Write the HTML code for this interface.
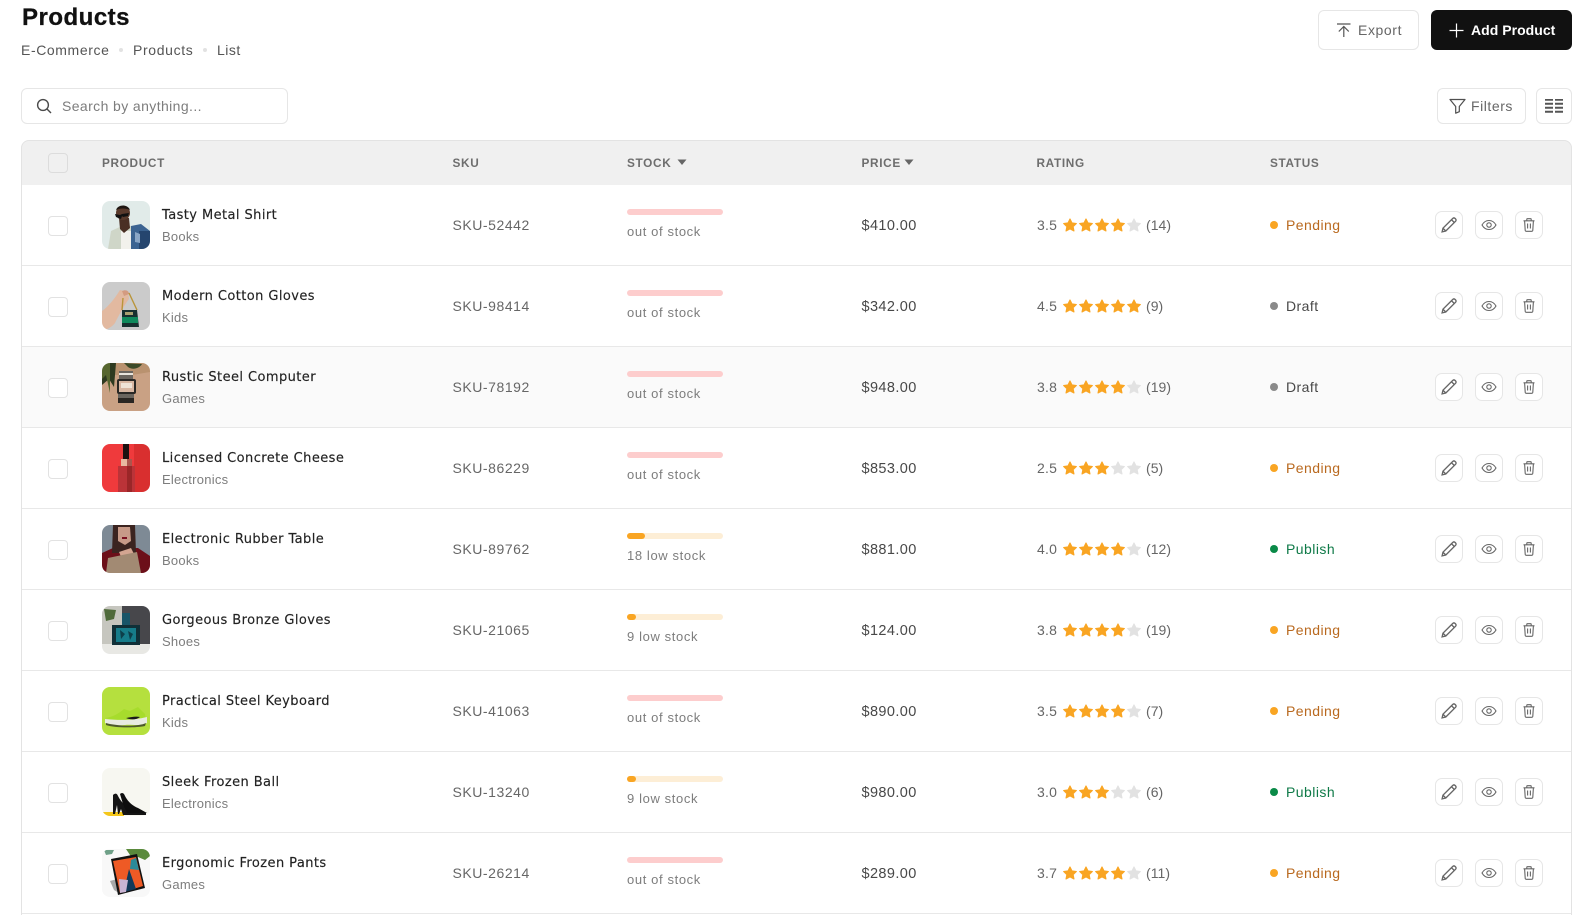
<!DOCTYPE html>
<html><head><meta charset="utf-8"><title>Products</title>
<style>
*{box-sizing:border-box}
html,body{margin:0;padding:0;width:1591px;height:915px;overflow:hidden;background:#fff;font-family:"Liberation Sans",sans-serif;color:#484848}
.a{position:absolute;white-space:nowrap}
.btn{position:absolute;border:1px solid #e6e6e6;border-radius:6px;background:#fff}
.frame{position:absolute;left:21px;top:140px;width:1551px;height:775px;border:1px solid #e3e3e3;border-bottom:0;border-radius:8px 8px 0 0;z-index:5;pointer-events:none}
.head{position:absolute;left:21px;top:140px;width:1551px;height:45px;background:#f0f0f0;border-radius:8px 8px 0 0}
.th{position:absolute;top:14px;line-height:18px;font-size:11.8px;font-weight:bold;color:#6e6e6e;letter-spacing:.66px}
.cb{position:absolute;left:27px;width:20px;height:20px;border:1px solid #e2e2e2;border-radius:4px;background:#fff}
.r{position:absolute;left:21px;width:1551px;height:81px;border-bottom:1px solid #e8e8e8;background:#fff}
.r.g{background:#fafafa}
.r .cb{top:31px}
.im{position:absolute;left:81px;top:16px;width:48px;height:48px;border-radius:8px;overflow:hidden}
.im svg{display:block;width:48px;height:48px;filter:blur(.35px)}
.n{position:absolute;left:141px;top:21px;line-height:20px;font-family:"DejaVu Sans",sans-serif;font-size:13px;color:#222;white-space:nowrap;letter-spacing:.42px;-webkit-text-stroke:.15px #222}
.c{position:absolute;left:141px;top:42px;line-height:20px;font-size:13px;color:#7d7d7d;letter-spacing:.25px;white-space:nowrap}
.s{position:absolute;left:431.5px;top:30px;line-height:20px;font-size:14px;color:#666;letter-spacing:.55px}
.bar{position:absolute;left:606px;top:24px;width:96px;height:6px;border-radius:3px;background:#fdcdcd}
.bar.l{background:#fdeed6}
.bar i{position:absolute;left:0;top:0;height:6px;border-radius:3px;background:#f9a523}
.st{position:absolute;left:606px;top:37px;line-height:20px;font-size:13px;color:#7d7d7d;letter-spacing:.62px;white-space:nowrap}
.p{position:absolute;left:840.5px;top:31px;line-height:20px;font-size:14.5px;color:#484848;letter-spacing:.4px}
.rt{position:absolute;left:1016px;top:30px;line-height:20px;font-size:14px;color:#666;letter-spacing:.2px}
.stars{position:absolute;left:1040px;top:33px;width:82px;height:14px}
.cnt{position:absolute;left:1125px;top:30px;line-height:20px;font-size:14px;color:#666;letter-spacing:.05px}
.dot{position:absolute;left:1249px;top:36px;width:8px;height:8px;border-radius:50%}
.stt{position:absolute;left:1265px;top:30px;line-height:20px;font-size:14px;letter-spacing:.45px}
.pe{color:#b9691f}.dp{background:#f9a523}
.dr{color:#484848}.dd{background:#8a8a8a}
.pu{color:#0f7a48}.du{background:#0a8a48}
.ac{position:absolute;top:26px;width:28px;height:28px;border:1px solid #e6e6e6;border-radius:7px;background:#fff}
.ac svg{position:absolute;left:5px;top:5px;width:16px;height:16px;fill:none;stroke:#666;stroke-width:1.1}
</style></head><body>
<svg width="0" height="0" style="position:absolute">
<defs>
<polygon id="st" points="7,.9 9,4.9 13.4,5.5 10.2,8.6 11,13 7,10.9 3,13 3.8,8.6 .6,5.5 5,4.9" stroke-width="1" stroke-linejoin="round"/>
<symbol id="s3" viewBox="0 0 78 14"><g fill="#f9a523" stroke="#f9a523"><use href="#st"/><use href="#st" x="16"/><use href="#st" x="32"/></g><g fill="#e2e2e2" stroke="#e2e2e2"><use href="#st" x="48"/><use href="#st" x="64"/></g></symbol>
<symbol id="s4" viewBox="0 0 78 14"><g fill="#f9a523" stroke="#f9a523"><use href="#st"/><use href="#st" x="16"/><use href="#st" x="32"/><use href="#st" x="48"/></g><g fill="#e2e2e2" stroke="#e2e2e2"><use href="#st" x="64"/></g></symbol>
<symbol id="s5" viewBox="0 0 78 14"><g fill="#f9a523" stroke="#f9a523"><use href="#st"/><use href="#st" x="16"/><use href="#st" x="32"/><use href="#st" x="48"/><use href="#st" x="64"/></g></symbol>
<symbol id="pen" viewBox="1.500 1.500 13 13"><path d="M2.400 13.600l.7-3L11 2.700c.6-.6 1.400-.6 2 0l.3.3c.6.6.6 1.400 0 2l-7.900 7.900zM3.100 10.600l2.300 2.300M10 3.700l2.300 2.300"/></symbol>
<symbol id="eye" viewBox="0 0 16 16"><path d="M1 8c1.700-3 4-4.500 7-4.500S13.300 5 15 8c-1.700 3-4 4.500-7 4.500S2.700 11 1 8z"/><circle cx="8" cy="8" r="2.200"/></symbol>
<symbol id="tr" viewBox="0 0 16 16"><path d="M2.500 3.800h11M5.800 3.600V2.200c0-.3.200-.5.500-.5h3.400c.3 0 .5.200.5.500v1.400M3.600 3.800l.6 9.400c.1.700.5 1.100 1.100 1.100h5.400c.6 0 1-.4 1.100-1.100l.6-9.400M6.600 6.500v5M9.400 6.500v5"/></symbol>
</defs></svg>

<div class="a" style="left:22px;top:3px;line-height:30px;font-size:24px;font-weight:bold;color:#111;letter-spacing:.5px;-webkit-text-stroke:.3px #111">Products</div>
<div class="a" style="left:21px;top:40px;line-height:20px;font-size:14px;color:#555;letter-spacing:.6px">E-Commerce</div>
<div class="a" style="left:119px;top:48px;width:4px;height:4px;border-radius:50%;background:#e2e2e2"></div>
<div class="a" style="left:133px;top:40px;line-height:20px;font-size:14px;color:#555;letter-spacing:.65px">Products</div>
<div class="a" style="left:203px;top:48px;width:4px;height:4px;border-radius:50%;background:#e2e2e2"></div>
<div class="a" style="left:217px;top:40px;line-height:20px;font-size:14px;color:#555;letter-spacing:.5px">List</div>

<div class="btn" style="left:1318px;top:10px;width:101px;height:40px"></div>
<svg class="a" style="left:1336px;top:22px" width="16" height="16" viewBox="0 0 16 16" fill="none" stroke="#555" stroke-width="1.200"><path d="M1 2h13.500M7.800 15V4.800M2.800 9.500l5-5 5 5"/></svg>
<div class="a" style="left:1358px;top:20px;line-height:20px;font-size:14px;color:#666;letter-spacing:.6px">Export</div>
<div class="a" style="left:1431px;top:10px;width:141px;height:40px;border-radius:6px;background:#111"></div>
<svg class="a" style="left:1449px;top:23px" width="15" height="15" viewBox="0 0 15 15" fill="none" stroke="#fff" stroke-width="1.200"><path d="M7.500 .5v14M.5 7.500h14"/></svg>
<div class="a" style="left:1471px;top:20px;line-height:20px;font-size:14px;font-weight:bold;color:#fff;letter-spacing:.03px">Add Product</div>

<div class="btn" style="left:21px;top:88px;width:267px;height:36px"></div>
<svg class="a" style="left:36px;top:98px" width="16" height="16" viewBox="0 0 16 16" fill="none" stroke="#4a4a4a" stroke-width="1.400"><circle cx="7" cy="7" r="5.400"/><path d="M11 11l4 4"/></svg>
<div class="a" style="left:62px;top:96px;line-height:20px;font-size:14px;color:#7d7d7d;letter-spacing:.4px">Search by anything...</div>

<div class="btn" style="left:1437px;top:88px;width:89px;height:36px"></div>
<svg class="a" style="left:1449px;top:98px" width="17" height="16" viewBox="0 0 17 16" fill="none" stroke="#4f4f4f" stroke-width="1.200" stroke-linejoin="round"><path d="M1 1.500h15l-5.700 7v5.200l-3.600 1.500V8.500z"/></svg>
<div class="a" style="left:1471px;top:96px;line-height:20px;font-size:14px;color:#666;letter-spacing:.55px">Filters</div>
<div class="btn" style="left:1536px;top:88px;width:36px;height:36px"></div>
<svg class="a" style="left:1545px;top:99px" width="18" height="14" viewBox="0 0 18 14" fill="#555"><path d="M0 0h8v2H0zM10 0h8v2h-8zM0 4h8v2H0zM10 4h8v2h-8zM0 8h8v2H0zM10 8h8v2h-8zM0 12h8v2H0zM10 12h8v2h-8z" transform="translate(0 -.3)"/></svg>

<div class="head">
<div class="cb" style="top:13px;background:#f0f0f0;border-color:#dcdcdc"></div>
<div class="th" style="left:81px">PRODUCT</div>
<div class="th" style="left:431.5px">SKU</div>
<div class="th" style="left:606px">STOCK</div>
<svg class="a" style="left:656px;top:19px" width="10" height="7" viewBox="0 0 10 7" fill="#666"><path d="M.5.500h9L5 6z"/></svg>
<div class="th" style="left:840.5px">PRICE</div>
<svg class="a" style="left:883px;top:19px" width="10" height="7" viewBox="0 0 10 7" fill="#666"><path d="M.5.500h9L5 6z"/></svg>
<div class="th" style="left:1015.500px">RATING</div>
<div class="th" style="left:1249px">STATUS</div>
</div>

<div class="r" style="top:185px"><div class="cb"></div>
<div class="im"><svg viewBox="0 0 48 48"><rect width="48" height="48" fill="#e1ebe9"/><path d="M6 48L9 30l11-5h10l18 5v18z" fill="#cfd6c8"/><path d="M19 30h11v18H19z" fill="#f2f1ec"/><path d="M29 25l10-2 9 7v18H29z" fill="#3b6391"/><path d="M37 30h11v18H37z" fill="#25456e"/><path d="M33 31l5 2v9l-5-1z" fill="#8aa6c6"/><path d="M17 17l10 0 1 10-6 5-4-4z" fill="#4a2f24"/><circle cx="21" cy="12" r="7" fill="#5a3a2c"/><path d="M14 9c2-6 12-6 14 0-4-2-10-2-14 0z" fill="#1f1712"/><path d="M13 13l5 1 2-1 7-1-1 3-5 1-1-1-1 3-5-2z" fill="#111"/></svg></div>
<div class="n">Tasty Metal Shirt</div><div class="c">Books</div><div class="s">SKU-52442</div>
<div class="bar"></div><div class="st">out of stock</div><div class="p">$410.00</div><div class="rt">3.5</div>
<svg class="stars" viewBox="0 0 82 14"><use href="#s4" width="82" height="14"/></svg><div class="cnt">(14)</div>
<i class="dot dp"></i><div class="stt pe">Pending</div>
<div class="ac" style="left:1414px"><svg><use href="#pen"/></svg></div><div class="ac" style="left:1454px"><svg><use href="#eye"/></svg></div><div class="ac" style="left:1494px"><svg><use href="#tr"/></svg></div></div>

<div class="r" style="top:266px"><div class="cb"></div>
<div class="im"><svg viewBox="0 0 48 48"><rect width="48" height="48" fill="#cbcbcb"/><path d="M0 29C7 24 13 16 18 8l8 2 1 7c-4 5-9 14-14 24-4 5-9 7-13 7z" fill="#e2b9a0"/><path d="M20 9c4-2 7 0 7 3l-5 2z" fill="#d49b80"/><path d="M21 16l-1 12M27 11l8 17" stroke="#b9953a" stroke-width="1.400" fill="none"/><path d="M20 28h15l2 17H20z" fill="#17302f"/><path d="M20 35h16v6H20z" fill="#0f8a5c"/><path d="M23 30h8v3h-8z" fill="#a8a070"/></svg></div>
<div class="n">Modern Cotton Gloves</div><div class="c">Kids</div><div class="s">SKU-98414</div>
<div class="bar"></div><div class="st">out of stock</div><div class="p">$342.00</div><div class="rt">4.5</div>
<svg class="stars" viewBox="0 0 82 14"><use href="#s5" width="82" height="14"/></svg><div class="cnt">(9)</div>
<i class="dot dd"></i><div class="stt dr">Draft</div>
<div class="ac" style="left:1414px"><svg><use href="#pen"/></svg></div><div class="ac" style="left:1454px"><svg><use href="#eye"/></svg></div><div class="ac" style="left:1494px"><svg><use href="#tr"/></svg></div></div>

<div class="r g" style="top:347px"><div class="cb"></div>
<div class="im"><svg viewBox="0 0 48 48"><rect width="48" height="48" fill="#c9a184"/><path d="M0 0h48v9L30 12H0z" fill="#b9926f"/><path d="M0 0h14l-2 24-5-8L0 22z" fill="#2e3a20"/><path d="M0 0h8v30L4 12 0 16z" fill="#56662f"/><path d="M22 0l18 1c-3 5-10 6-14 3z" fill="#3b4a28"/><path d="M17 8h14v9H17zM16 30h16v9H16z" fill="#6a655e"/><path d="M16 35h16v5H16z" fill="#2a2622"/><path d="M17 10h14v2H17z" fill="#e8e4dc"/><rect x="15" y="16" width="19" height="15" rx="2" fill="#2a2825"/><rect x="17" y="18" width="15" height="11" fill="#d8b7a2"/><path d="M19 20h11v5H19z" fill="#efe3d6"/></svg></div>
<div class="n">Rustic Steel Computer</div><div class="c">Games</div><div class="s">SKU-78192</div>
<div class="bar"></div><div class="st">out of stock</div><div class="p">$948.00</div><div class="rt">3.8</div>
<svg class="stars" viewBox="0 0 82 14"><use href="#s4" width="82" height="14"/></svg><div class="cnt">(19)</div>
<i class="dot dd"></i><div class="stt dr">Draft</div>
<div class="ac" style="left:1414px"><svg><use href="#pen"/></svg></div><div class="ac" style="left:1454px"><svg><use href="#eye"/></svg></div><div class="ac" style="left:1494px"><svg><use href="#tr"/></svg></div></div>

<div class="r" style="top:428px"><div class="cb"></div>
<div class="im"><svg viewBox="0 0 48 48"><rect width="48" height="48" fill="#ef3a3c"/><path d="M32 0h16v48H32z" fill="#d92f2f"/><path d="M21 0h6v15h-6z" fill="#1d1111"/><path d="M19 15h11v7H19z" fill="#e8b8a0"/><path d="M16 22h17v26H16z" fill="#bb3338"/><path d="M25 15h5v33h-5z" fill="#8a2020" opacity=".65"/></svg></div>
<div class="n">Licensed Concrete Cheese</div><div class="c">Electronics</div><div class="s">SKU-86229</div>
<div class="bar"></div><div class="st">out of stock</div><div class="p">$853.00</div><div class="rt">2.5</div>
<svg class="stars" viewBox="0 0 82 14"><use href="#s3" width="82" height="14"/></svg><div class="cnt">(5)</div>
<i class="dot dp"></i><div class="stt pe">Pending</div>
<div class="ac" style="left:1414px"><svg><use href="#pen"/></svg></div><div class="ac" style="left:1454px"><svg><use href="#eye"/></svg></div><div class="ac" style="left:1494px"><svg><use href="#tr"/></svg></div></div>

<div class="r" style="top:509px"><div class="cb"></div>
<div class="im"><svg viewBox="0 0 48 48"><rect width="48" height="48" fill="#7e8a95"/><path d="M0 28l11-5 25 0 12 8v17H0z" fill="#6c0f19"/><path d="M11 0h22l1 28H10z" fill="#3b2420"/><path d="M16 2h12l1 14-6 4-7-4z" fill="#c79a88"/><path d="M17 27l12-4 3 6-12 5z" fill="#d3a591"/><path d="M20 12h5v2h-5z" fill="#7a1020"/><path d="M6 33l29-6 4 21H4z" fill="#a28a73"/></svg></div>
<div class="n">Electronic Rubber Table</div><div class="c">Books</div><div class="s">SKU-89762</div>
<div class="bar l"><i style="width:18px"></i></div><div class="st">18 low stock</div><div class="p">$881.00</div><div class="rt">4.0</div>
<svg class="stars" viewBox="0 0 82 14"><use href="#s4" width="82" height="14"/></svg><div class="cnt">(12)</div>
<i class="dot du"></i><div class="stt pu">Publish</div>
<div class="ac" style="left:1414px"><svg><use href="#pen"/></svg></div><div class="ac" style="left:1454px"><svg><use href="#eye"/></svg></div><div class="ac" style="left:1494px"><svg><use href="#tr"/></svg></div></div>

<div class="r" style="top:590px"><div class="cb"></div>
<div class="im"><svg viewBox="0 0 48 48"><rect width="48" height="48" fill="#47474b"/><path d="M0 0h20v40H0z" fill="#c6c6bf"/><path d="M2 3l12 1-2 9-8 2z" fill="#4f6a3a"/><path d="M0 38h48v10H0z" fill="#e8e8e4"/><path d="M20 7h8v12h-8z" fill="#175568"/><path d="M10 19h28v20H10z" fill="#103038"/><path d="M14 22h20v14H14z" fill="#167c8a"/><path d="M18 24l5 4-4 5zM26 25l5 3-3 6z" fill="#0d3f4a"/></svg></div>
<div class="n">Gorgeous Bronze Gloves</div><div class="c">Shoes</div><div class="s">SKU-21065</div>
<div class="bar l"><i style="width:9px"></i></div><div class="st">9 low stock</div><div class="p">$124.00</div><div class="rt">3.8</div>
<svg class="stars" viewBox="0 0 82 14"><use href="#s4" width="82" height="14"/></svg><div class="cnt">(19)</div>
<i class="dot dp"></i><div class="stt pe">Pending</div>
<div class="ac" style="left:1414px"><svg><use href="#pen"/></svg></div><div class="ac" style="left:1454px"><svg><use href="#eye"/></svg></div><div class="ac" style="left:1494px"><svg><use href="#tr"/></svg></div></div>

<div class="r" style="top:671px"><div class="cb"></div>
<div class="im"><svg viewBox="0 0 48 48"><rect width="48" height="48" fill="#b5e03e"/><path d="M3 31c8-1 13-4 19-9l6 2 8-4 7 7 1 7-20 3z" fill="#a7dc2c"/><path d="M3 32c12 1 25 2 42-2l0 6c-8 4-15 1-22 2-7 1-16 0-20-2z" fill="#e8ebe0"/><path d="M24 31c5-1 10-2 14-1-4 3-9 3-14 1z" fill="#1a1a1a"/><path d="M4 36c10 3 32 4 40 0l-1 3c-10 2-30 2-39-1z" fill="#4d5a2a"/></svg></div>
<div class="n">Practical Steel Keyboard</div><div class="c">Kids</div><div class="s">SKU-41063</div>
<div class="bar"></div><div class="st">out of stock</div><div class="p">$890.00</div><div class="rt">3.5</div>
<svg class="stars" viewBox="0 0 82 14"><use href="#s4" width="82" height="14"/></svg><div class="cnt">(7)</div>
<i class="dot dp"></i><div class="stt pe">Pending</div>
<div class="ac" style="left:1414px"><svg><use href="#pen"/></svg></div><div class="ac" style="left:1454px"><svg><use href="#eye"/></svg></div><div class="ac" style="left:1494px"><svg><use href="#tr"/></svg></div></div>

<div class="r" style="top:752px"><div class="cb"></div>
<div class="im"><svg viewBox="0 0 48 48"><rect width="48" height="48" fill="#f7f7f1"/><path d="M0 44h22v4H0z" fill="#f4c61a"/><path d="M11 27c2-2 4-2 5 1 3 6 8 11 14 13l14 4v2H21l-2-6-2 5h-1l-1-9-2 9h-2z" fill="#141414"/><path d="M18 26c2-2 4-1 5 2 3 6 8 10 13 12l9 5H25l-4-9z" fill="#0e0e0e"/></svg></div>
<div class="n">Sleek Frozen Ball</div><div class="c">Electronics</div><div class="s">SKU-13240</div>
<div class="bar l"><i style="width:9px"></i></div><div class="st">9 low stock</div><div class="p">$980.00</div><div class="rt">3.0</div>
<svg class="stars" viewBox="0 0 82 14"><use href="#s3" width="82" height="14"/></svg><div class="cnt">(6)</div>
<i class="dot du"></i><div class="stt pu">Publish</div>
<div class="ac" style="left:1414px"><svg><use href="#pen"/></svg></div><div class="ac" style="left:1454px"><svg><use href="#eye"/></svg></div><div class="ac" style="left:1494px"><svg><use href="#tr"/></svg></div></div>

<div class="r" style="top:833px"><div class="cb"></div>
<div class="im"><svg viewBox="0 0 48 48"><rect width="48" height="48" fill="#f8f8f8"/><path d="M24 0h22l2 7-5 4-7-3-6 1z" fill="#5a8a3c"/><path d="M2 1h10l-2 4-6 1z" fill="#6fa088"/><path d="M8 32l7-2 2 14-5-3z" fill="#a8a8a8"/><path d="M9 10l26-5 8 34-27 7z" fill="#111"/><path d="M11 12l23-4 7 29-23 7z" fill="#ee5a25"/><path d="M27 20l7 20-12 3 2-10z" fill="#10395a"/><path d="M34 9l3 12-9-1 1-9z" fill="#2a8a9a"/><path d="M17 30l9 1-2 12-6 1z" fill="#c8b4d4"/></svg></div>
<div class="n">Ergonomic Frozen Pants</div><div class="c">Games</div><div class="s">SKU-26214</div>
<div class="bar"></div><div class="st">out of stock</div><div class="p">$289.00</div><div class="rt">3.7</div>
<svg class="stars" viewBox="0 0 82 14"><use href="#s4" width="82" height="14"/></svg><div class="cnt">(11)</div>
<i class="dot dp"></i><div class="stt pe">Pending</div>
<div class="ac" style="left:1414px"><svg><use href="#pen"/></svg></div><div class="ac" style="left:1454px"><svg><use href="#eye"/></svg></div><div class="ac" style="left:1494px"><svg><use href="#tr"/></svg></div></div>

<div class="frame"></div>
</body></html>
